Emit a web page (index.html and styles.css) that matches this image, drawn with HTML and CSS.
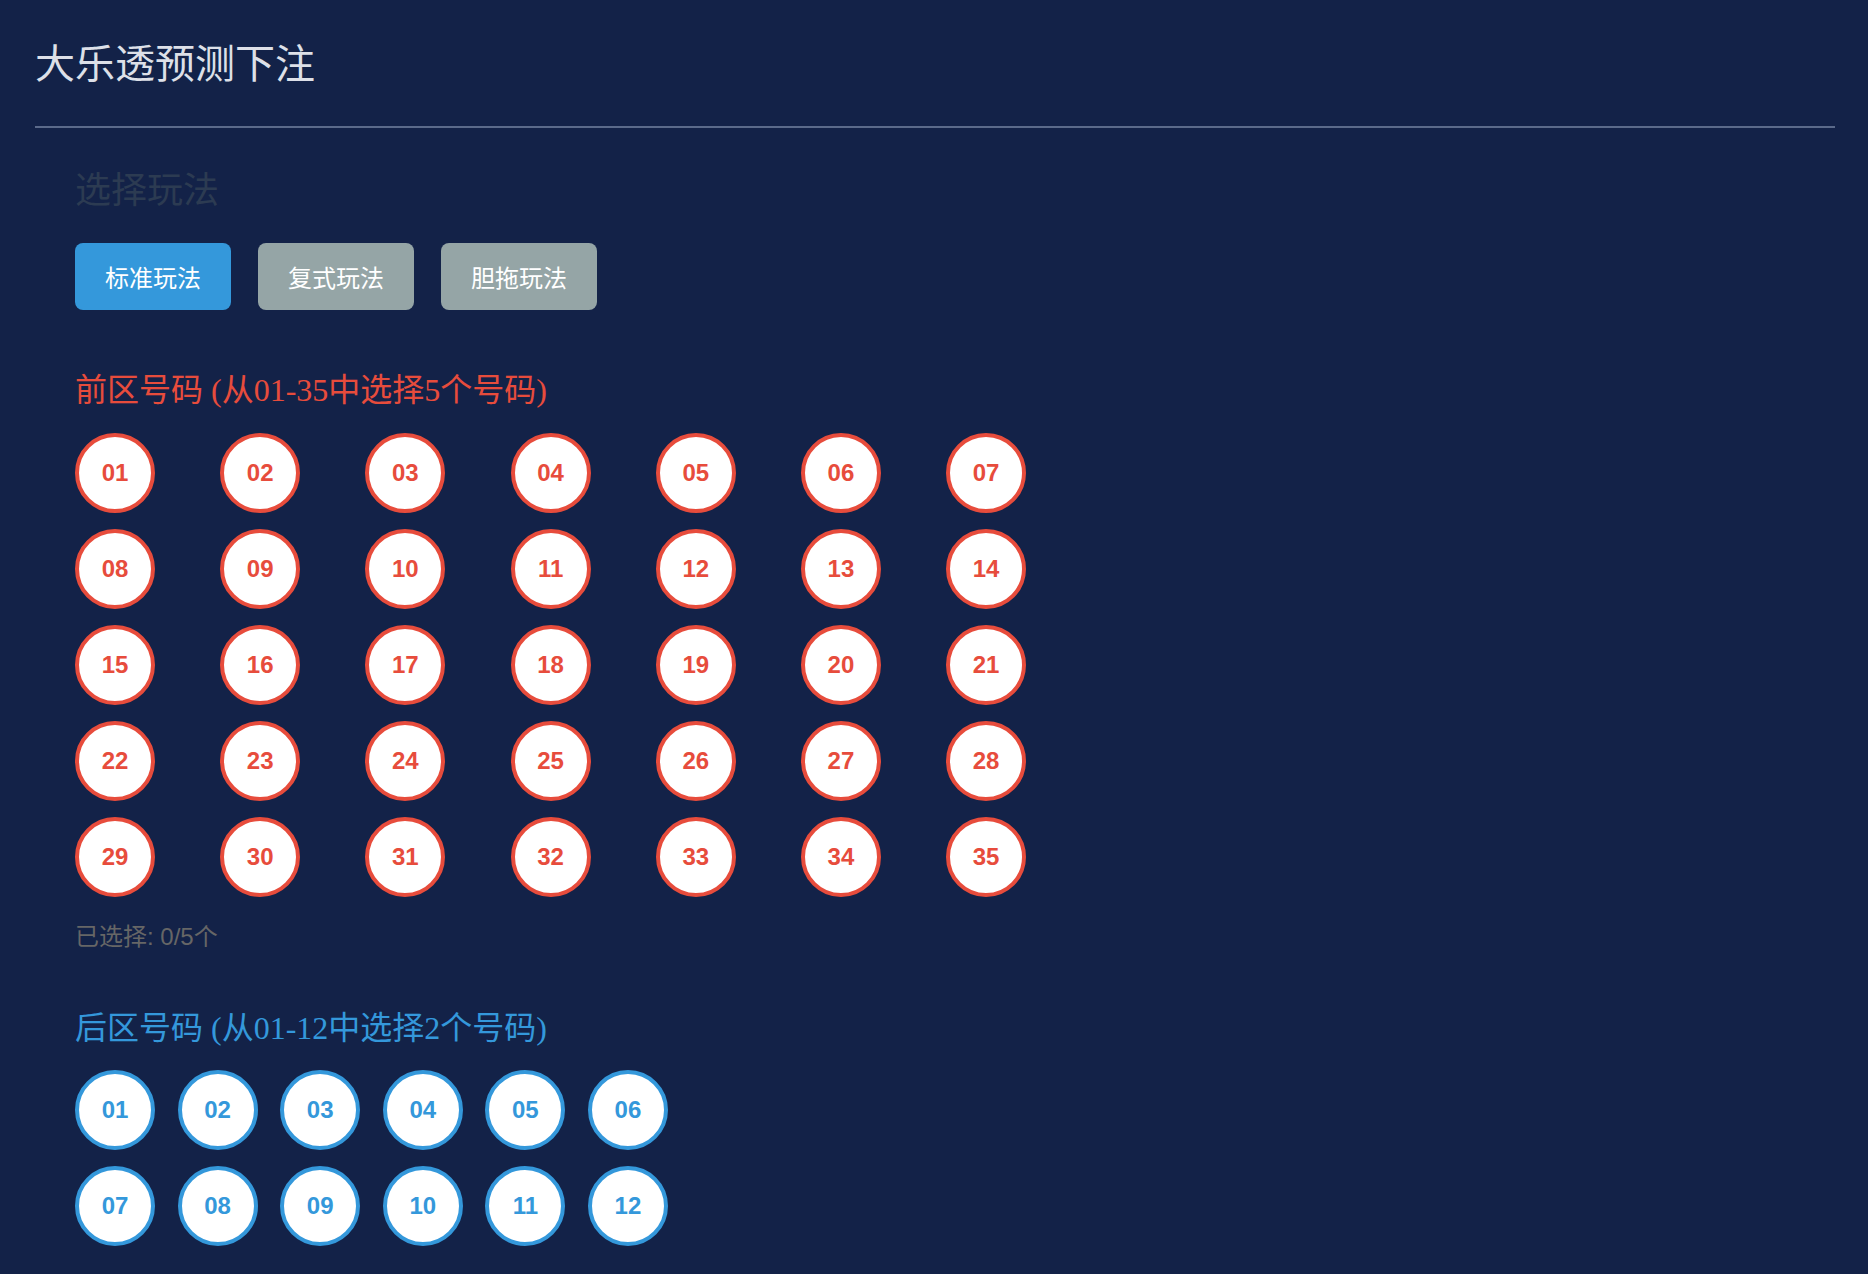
FILE: index.html
```html
<!DOCTYPE html>
<html lang="zh-CN">
<head>
<meta charset="utf-8">
<title>大乐透预测下注</title>
<link rel="stylesheet" href="styles.css">
</head>
<body>
<div class="app">
  <header class="header">
    <h1 class="title">大乐透预测下注</h1>
  </header>
  <main class="content">
    <h2 class="section-title">选择玩法</h2>
    <div class="modes">
      <button class="mode active">标准玩法</button>
      <button class="mode">复式玩法</button>
      <button class="mode">胆拖玩法</button>
    </div>

    <h3 class="zone-title front">前区号码 (从01-35中选择5个号码)</h3>
    <div class="balls front-grid">
      <span class="ball red">01</span><span class="ball red">02</span><span class="ball red">03</span><span class="ball red">04</span><span class="ball red">05</span><span class="ball red">06</span><span class="ball red">07</span>
      <span class="ball red">08</span><span class="ball red">09</span><span class="ball red">10</span><span class="ball red">11</span><span class="ball red">12</span><span class="ball red">13</span><span class="ball red">14</span>
      <span class="ball red">15</span><span class="ball red">16</span><span class="ball red">17</span><span class="ball red">18</span><span class="ball red">19</span><span class="ball red">20</span><span class="ball red">21</span>
      <span class="ball red">22</span><span class="ball red">23</span><span class="ball red">24</span><span class="ball red">25</span><span class="ball red">26</span><span class="ball red">27</span><span class="ball red">28</span>
      <span class="ball red">29</span><span class="ball red">30</span><span class="ball red">31</span><span class="ball red">32</span><span class="ball red">33</span><span class="ball red">34</span><span class="ball red">35</span>
    </div>
    <p class="selected">已选择: 0/5个</p>

    <h3 class="zone-title back">后区号码 (从01-12中选择2个号码)</h3>
    <div class="balls back-grid">
      <span class="ball blue">01</span><span class="ball blue">02</span><span class="ball blue">03</span><span class="ball blue">04</span><span class="ball blue">05</span><span class="ball blue">06</span>
      <span class="ball blue">07</span><span class="ball blue">08</span><span class="ball blue">09</span><span class="ball blue">10</span><span class="ball blue">11</span><span class="ball blue">12</span>
    </div>
  </main>
</div>
</body>
</html>
```

FILE: styles.css
```css
html, body {
  margin: 0;
  padding: 0;
}

body {
  background: #132248;
  font-family: "Noto Sans CJK SC", "Liberation Sans", sans-serif;
  overflow: hidden;
}

.app {
  padding: 0 33px 0 35px;
}

.header {
  padding: 32px 0 36px;
  border-bottom: 2px solid #5b6a8a;
}

.title {
  margin: 0;
  font-size: 40px;
  line-height: 58px;
  font-weight: 400;
  color: #dde0e8;
}

.content {
  padding: 33px 0 0 40px;
}

.section-title {
  margin: 0;
  font-size: 36px;
  line-height: 52px;
  font-weight: 400;
  color: #2c3b52;
}

.modes {
  display: flex;
  gap: 27px;
  margin-top: 30px;
}

.mode {
  border: 0;
  border-radius: 8px;
  padding: 16px 30px;
  font-family: "Noto Sans CJK SC", sans-serif;
  font-size: 24px;
  line-height: 35px;
  color: #ffffff;
  background: #95a5a6;
}

.mode.active {
  background: #3498db;
}

.zone-title {
  margin: 57px 0 0;
  font-family: "Liberation Serif", "Noto Sans CJK SC", serif;
  font-size: 32px;
  line-height: 46px;
  font-weight: 400;
}

.zone-title.front {
  color: #e74c3c;
}

.zone-title.back {
  color: #3498db;
  margin-top: 54px;
}

.balls {
  display: grid;
  row-gap: 16px;
  margin-top: 20px;
}

.front-grid {
  grid-template-columns: repeat(7, 80px);
  column-gap: 65.2px;
}

.back-grid {
  grid-template-columns: repeat(6, 80px);
  column-gap: 22.6px;
  margin-top: 19px;
}

.ball {
  box-sizing: border-box;
  width: 80px;
  height: 80px;
  border-radius: 50%;
  border: 4px solid;
  background: #ffffff;
  display: flex;
  align-items: center;
  justify-content: center;
  font-family: "Liberation Sans", sans-serif;
  font-size: 24px;
  font-weight: 700;
}

.ball.red {
  border-color: #e74c3c;
  color: #e74c3c;
}

.ball.blue {
  border-color: #3498db;
  color: #3498db;
}

.selected {
  margin: 26px 0 0;
  font-family: "Liberation Sans", "Noto Sans CJK SC", sans-serif;
  font-size: 24px;
  line-height: 28px;
  color: #666666;
}
```
